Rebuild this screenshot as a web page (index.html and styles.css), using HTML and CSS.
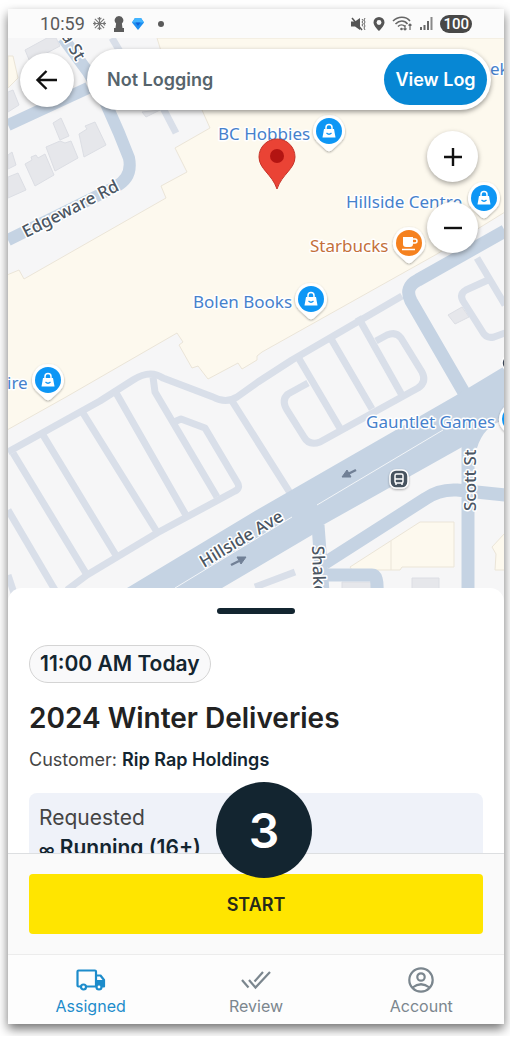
FILE: index.html
```html
<!DOCTYPE html>
<html lang="en">
<head>
<meta charset="utf-8">
<meta name="viewport" content="width=device-width, initial-scale=1">
<title>2024 Winter Deliveries</title>
<link rel="stylesheet" href="styles.css">
</head>
<body>
<div class="stage">
<div class="phone">
  <header class="status">
    <div class="status-group">
      <span class="clock">10:59</span>
      <svg class="icon-snow" viewBox="0 0 14 14" aria-hidden="true"><g stroke="#777" stroke-width="1.2" fill="none"><path d="M7 0v14M0 7h14M2 2l10 10M12 2L2 12"/><path d="M5 1l2 2 2-2M5 13l2-2 2 2M1 5l2 2-2 2M13 5l-2 2 2 2"/></g></svg>
      <svg class="icon-pawn" viewBox="0 0 10 16" aria-hidden="true"><path d="M5 0a4.300 4.300 0 0 1 2.900 7.500L8.500 12H10v4H0v-4h1.500L2.100 7.500A4.300 4.300 0 0 1 5 0z" fill="#5c5c5c"/></svg>
      <svg class="icon-gem" viewBox="0 0 12 14" aria-hidden="true"><path d="M3 1h6l3 4.500L6 13 0 5.500z" fill="#1c8ef0"/><path d="M3 1h6l3 4.500H0z" fill="#42b4ff"/><path d="M3.500 5.500h5L6 9z" fill="#1262d8"/></svg>
      <span class="dot"></span>
    </div>
    <div class="status-group status-right">
      <svg class="icon-mute" viewBox="0 0 15 14" aria-hidden="true"><path d="M0 4.500h4L9 1v12L4 9.500H0z" fill="#555"/><path d="M1 1l10 12" stroke="#555" stroke-width="1.500"/><path d="M11 2l1 1.500-1 1.500 1 1.500-1 1.500 1 1.500M14 1l-1 2 1 2-1 2 1 2-1 2 1 2" stroke="#666" fill="none"/></svg>
      <svg class="icon-place" viewBox="0 0 12 14" aria-hidden="true"><path d="M6 0a5.500 5.500 0 0 1 5.500 5.500C11.500 9 6 14 6 14S.5 9 .5 5.500A5.500 5.500 0 0 1 6 0z" fill="#555"/><circle cx="6" cy="5.500" r="2.400" fill="#fafafa"/></svg>
      <svg class="icon-wifi" viewBox="0 0 21 15" aria-hidden="true"><g fill="none" stroke="#666" stroke-width="1.600"><path d="M1 5c5-5 13-5 17 0M3.500 8c4-4 9-4 12 0M6 10.500c2-2 5-2 7 0"/><path d="M13 9v5M11.500 12.500L13 14l1.500-1.500M18 14V8M16.500 9.500L18 8l1.500 1.500" stroke-width="1.200"/></g><circle cx="9.500" cy="13" r="1.300" fill="#666"/></svg>
      <svg class="icon-signal" viewBox="0 0 13 13" aria-hidden="true"><path d="M0 10h2v3H0zM3.500 8h2v5h-2zM7 4h2v9H7z" fill="#666"/><path d="M10.500 0h2v13h-2z" fill="#888"/></svg>
      <span class="battery">100</span>
    </div>
  </header>

  <main class="map">
    <svg class="map-art" viewBox="8 38 496 562" preserveAspectRatio="xMidYMin slice" role="img" aria-label="Map around Hillside Avenue">
      <defs>
        <filter id="soft" x="-30%" y="-30%" width="160%" height="170%"><feDropShadow dx="0" dy="1" stdDeviation="1" flood-opacity=".35"/></filter>
        <g id="pin"><path d="M0-16A16 16 0 0 1 12 10.500L3 19Q0 21.500-3 19L-12 10.500A16 16 0 0 1 0-16z" fill="#fff" filter="url(#soft)"/></g>
        <g id="shop"><use href="#pin"/><circle r="13" fill="#0d96f5"/><path d="M-5-2H5L6.500 6.500h-13z" fill="#fff"/><path d="M-3-1v-2.500a3 3 0 0 1 6 0V-1" fill="none" stroke="#fff" stroke-width="1.500"/><path d="M-2.500 2Q0 4.500 2.500 2" fill="none" stroke="#0d96f5" stroke-width="1.200"/></g>
      </defs>
      <rect x="8" y="38" width="496" height="562" fill="#f6f6f7"/>
      <g class="blocks">
        <path d="M25 50L47 38H56L60 46 30 62zM8 92l5-2 6 15-11 7zM53 123l8-5 8 18-9 4zM79 134l8-5-2-3 10-4 11 23-22 12zM46 147l14-6 5 2 6-2 7 17-23 13zM25 164l7-4-1-3 5-2 2 3 7-4 9 21-19 11zM8 177l10-4 8 17-18 8zM8 155l4-3 4 13-8 4zM142 112l18-2-14 7zM448 315l14-8 7 10-14 7zM412 578h27v12h-27zM342 582h29v10h-29z"/>
      </g>
      <g class="land">
        <path d="M8 56h5l5 22-10 10z"/>
        <path d="M157 38l8 26 37 46 8 18-35 20 12 24-26 14 5 12L24 279l-5-9-12 5v155l59-33 111-64 6 9-4 3 13 23 6-2 10 13 30-16 4 6 15-9v-4l5-4 175-98 68-42V38z"/>
        <path d="M350 567l42-27 28-18h34v45h-52l-2 3h-48zM391 541v29M505 533l-13 14 4 7-1 16h10z"/>
      </g>
      <g class="lanes">
        <path d="M112 38l13 22 38 48 13 25"/>
        <path d="M8 452L100 401 133 380Q150 369 163 378L213 397Q226 404 237 397L258 382 292 360 402 296"/>
        <path d="M13 453L87 575M43 435l74 122M83 413l74 119M115 391l72 126M153 377l2 15 62 105M8 510l47 80M8 575l6 18"/>
        <path d="M67 590L87 575 157 533 235 491Q241 488 237 482L205 428 181 419 174 422M232 401l60 95"/>
        <path d="M308 383L288 394Q281 400 287 410L304 437Q309 446 320 442L418 388Q427 382 422 372L401 338Q396 331 387 335L376 341M298 357l43 73M330 337l42 72M358 317l45 80"/>
        <path d="M477 258l28 47M488 280l-22 10Q459 294 463 301L482 331Q486 339 494 337L505 333M255 587l40-15"/>
      </g>
      <g class="roads">
        <path d="M63 38L88 72 104 99 119 133 129 158Q133 178 115 187L8 240M8 125L88 88"/>
        <path class="wide" d="M505 231L418 280Q404 287 411 301L466 396"/>
        <path class="wide" d="M468 430V592M318 525l5 67M325 563L425 499Q439 489 457 490L505 495M327 575h45q6 0 5 17"/>
        <path class="fill" d="M127 588L255 511 455 396 505 366V420Q484 425 477 448L464 446 323 525 312 535 222 588z"/>
      </g>
      <path d="M443 430L317 505M292 517L175 588" fill="none" stroke="#f2f5f8" stroke-width="1"/>
      <g fill="#718096" stroke="#718096" stroke-width="2.500"><path d="M356 470l-8 4"/><path d="M342 477l5-7 4 7z" stroke-width="1"/><path d="M231 565l8-4"/><path d="M246 557l-9 0 4 7z" stroke-width="1"/></g>
      <g class="street">
        <text transform="translate(26 238) rotate(-27)">Edgeware Rd</text>
        <text transform="translate(204 568) rotate(-31)">Hillside Ave</text>
        <text transform="translate(476 511) rotate(-90)">Scott St</text>
        <text transform="translate(312 546) rotate(88)">Shake</text>
        <text transform="translate(61 36) rotate(60)">a St</text>
      </g>
      <g class="place">
        <text x="218" y="140">BC Hobbies</text>
        <text x="346" y="208">Hillside Centre</text>
        <text x="193" y="308">Bolen Books</text>
        <text x="7" y="389">ire</text>
        <text x="366" y="428">Gauntlet Games</text>
        <text x="490" y="75">ek</text>
        <text class="cafe" x="310" y="252">Starbucks</text>
      </g>
      <use href="#shop" x="329" y="131"/>
      <use href="#shop" x="484" y="198"/>
      <use href="#shop" x="311" y="299"/>
      <use href="#shop" x="48" y="380"/>
      <use href="#shop" x="515" y="419"/>
      <g transform="translate(409 243)"><use href="#pin"/><circle r="13" fill="#f5811f"/><path d="M-6-6H4V1Q4 4 1 4H-3Q-6 4-6 1z" fill="#fff"/><path d="M4-4h2q2 0 2 2t-2 2H4M-7 6.500H6" fill="none" stroke="#fff" stroke-width="1.500"/></g>
      <circle cx="510" cy="363" r="8" fill="#3c4656" stroke="#fff" stroke-width="1.500"/>
      <g transform="translate(399 479)"><rect x="-9" y="-9" width="18" height="18" rx="6" fill="#46525f" stroke="#fff" stroke-width="1.500" filter="url(#soft)"/><rect x="-4" y="-5" width="8" height="9" rx="1.500" fill="none" stroke="#fff" stroke-width="1.500"/><path d="M-4 0H4M-3 4v2M3 4v2" stroke="#fff" stroke-width="1.500"/></g>
      <path d="M277 139a18 18 0 0 1 18 18c0 12-13 17-18 32-5-15-18-20-18-32a18 18 0 0 1 18-18z" fill="#ea4335" stroke="#c5352a" stroke-width="1"/>
      <circle cx="277" cy="156" r="7" fill="#b31412"/>
    </svg>

    <div class="topbar">
      <button class="round back" aria-label="Back"><svg viewBox="0 0 24 24"><path d="M22 12H3M11.500 3L2.500 12l9 9"/></svg></button>
      <div class="logbar">
        <span class="logstate">Not Logging</span>
        <button class="viewlog">View Log</button>
      </div>
    </div>
    <div class="zoom">
      <button class="round" aria-label="Zoom in"><svg viewBox="0 0 24 24"><path d="M12 3v18M3 12h18"/></svg></button>
      <button class="round" aria-label="Zoom out"><svg viewBox="0 0 24 24"><path d="M3 12h18"/></svg></button>
    </div>
  </main>

  <section class="sheet">
    <div class="handle"></div>
    <span class="time">11:00 AM Today</span>
    <h1>2024 Winter Deliveries</h1>
    <p class="customer">Customer: <b>Rip Rap Holdings</b></p>
    <div class="card">
      <p>Requested</p>
      <p><b><span class="infinity">∞</span> Running (16+)</b></p>
    </div>
  </section>

  <div class="action"><button class="start">START</button></div>

  <nav class="tabs">
    <a class="tab active" href="#assigned">
      <svg viewBox="0 0 30 26" aria-hidden="true"><path d="M20 19.500H2.500Q1.500 19.500 1.500 18.500V4.500Q1.500 3.500 2.500 3.500H19Q20 3.500 20 4.500zM20 8.500h4.500L28 13v6.500h-8" fill="none" stroke="currentColor" stroke-width="2.200" stroke-linejoin="round"/><path d="M20 13h8v6h-8z" fill="currentColor"/><circle cx="7.500" cy="20" r="2.500" fill="#fff" stroke="currentColor" stroke-width="2.200"/><circle cx="23" cy="20" r="2.500" fill="#fff" stroke="currentColor" stroke-width="2.200"/></svg>
      <span>Assigned</span></a>
    <a class="tab" href="#review">
      <svg viewBox="0 0 30 26" aria-hidden="true"><path d="M1 13l6.500 7.500M8 13l6.500 7.500L29 5M13.500 14.500L22 5" fill="none" stroke="currentColor" stroke-width="2.200"/></svg>
      <span>Review</span></a>
    <a class="tab" href="#account">
      <svg viewBox="0 0 30 26" aria-hidden="true"><g fill="none" stroke="currentColor" stroke-width="2.200"><circle cx="15" cy="13" r="11.700"/><circle cx="15" cy="10" r="3.700"/><path d="M6.500 20.500Q15 14 23.500 20.500"/></g></svg>
      <span>Account</span></a>
  </nav>

  <div class="step">3</div>
</div>
</div>
</body>
</html>
```
FILE: styles.css
```css
* { box-sizing: border-box; }
body { margin: 0; background: #fff; color: #132530; font-family: Inter, Roboto, sans-serif; }
button { border: 0; padding: 0; font: inherit; color: inherit; cursor: pointer; }
h1, p { margin: 0; }

.stage { height: calc(100vh - 9px); padding: 9px 6px 12px 8px; overflow: hidden; }
.phone { position: relative; display: flex; flex-direction: column; height: 100%; background: #fff; box-shadow: 0 5px 10px rgba(0, 0, 0, .55); }

.status { flex: none; display: flex; justify-content: space-between; align-items: center; height: 29px; padding: 0 32px; background: #fbfbfb; color: #5a5a5a; font-family: Roboto, sans-serif; }
.status-group { display: flex; align-items: center; gap: 8px; }
.status svg { display: block; flex: none; }
.clock { font-size: 18px; }
.icon-snow { width: 13px; height: 13px; }
.icon-pawn { width: 10px; height: 16px; }
.icon-gem { width: 12px; height: 14px; }
.dot { width: 6px; height: 6px; margin-left: 6px; border-radius: 50%; background: #5a5a5a; }
.icon-mute { width: 15px; height: 14px; }
.icon-place { width: 12px; height: 14px; }
.icon-wifi { width: 21px; height: 15px; }
.status-right { gap: 7px; }
.icon-signal { width: 13px; height: 13px; }
.battery { padding: 0 3px; border-radius: 9px; background: #484848; color: #fff; font-size: 15px; font-weight: 500; line-height: 18px; }

.map { position: relative; flex: none; aspect-ratio: 496 / 562; overflow: hidden; }
.map-art { display: block; width: 100%; height: 100%; }
.blocks { fill: #e6e7eb; stroke: #dcdee4; }
.land { fill: #fdf9ee; stroke: #ebe5d8; }
.lanes { fill: none; stroke: #d9dfe9; stroke-width: 7; stroke-linejoin: round; }
.roads { fill: none; stroke: #c5d3e3; stroke-width: 12; stroke-linejoin: round; }
.roads .wide { stroke-width: 13; }
.roads .fill { fill: #c5d3e3; stroke: none; }
.map-art text { font-family: "Noto Sans", sans-serif; font-size: 17px; paint-order: stroke; stroke: #fff; stroke-width: 3px; stroke-linejoin: round; }
.street { fill: #4b5663; font-weight: 500; }
.place { fill: #4681cc; }
.place .cafe { fill: #c4703a; }

.topbar { position: absolute; top: 11px; left: 12px; right: 13px; display: flex; align-items: center; gap: 13px; }
.round { display: grid; place-items: center; width: 51px; height: 51px; border-radius: 50%; background: #fff; box-shadow: 0 2px 5px rgba(0, 0, 0, .35); }
.round svg { width: 24px; height: 24px; fill: none; stroke: #111; stroke-width: 2.4; }
.back { flex: none; width: 54px; height: 54px; }
.logbar { flex: 1; display: flex; align-items: center; justify-content: space-between; height: 61px; padding: 0 4px 0 20px; border-radius: 31px; background: #fff; box-shadow: 0 2px 5px rgba(0, 0, 0, .4); }
.logstate { color: #56646c; font-size: 18px; font-weight: 600; }
.viewlog { width: 103px; height: 51px; border-radius: 26px; background: #0787d4; color: #fff; font-size: 18px; font-weight: 600; }
.zoom { position: absolute; top: 93px; right: 26px; display: grid; gap: 20px; }

.sheet { position: relative; flex: 1; min-height: 0; margin-top: -12px; padding: 20px 21px 0; overflow: hidden; border-radius: 14px 14px 0 0; background: #fff; }
.handle { width: 78px; height: 6px; margin: 0 auto 31px; border-radius: 3px; background: #132530; }
.time { display: block; width: fit-content; padding: 0 10px; border: 1px solid #d4d4d4; border-radius: 19px; background: #f9f9fa; font-size: 21px; font-weight: 600; line-height: 36px; }
h1 { margin-top: 19px; color: #222; font-size: 28px; font-weight: 600; line-height: 32px; }
.customer { margin-top: 14px; color: #444; font-size: 18px; line-height: 24px; }
.customer b, .card b { color: #132530; font-weight: 600; }
.card { margin-top: 21px; padding: 10px; border-radius: 8px; background: #eff2f9; color: #444; font-size: 21px; line-height: 30px; }
.infinity { font-size: 16px; }

.action { flex: none; position: relative; padding: 20px 21px; border-top: 1px solid #dddfe1; background: #fafafa; }
.start { display: block; width: 100%; height: 60px; border-radius: 4px; background: #ffe500; color: #26291a; font-size: 18px; font-weight: 600; }
.tabs { flex: none; display: grid; grid-template-columns: repeat(3, 1fr); height: 70px; padding-top: 12px; border-top: 1px solid #ececec; background: #fdfdfd; }
.tab { display: flex; flex-direction: column; align-items: center; gap: 3px; color: #7b868e; font-size: 16px; line-height: 20px; text-decoration: none; }
.tab svg { display: block; width: 30px; height: 26px; }
.active { color: #1d8ccb; }
.step { position: absolute; bottom: 146px; left: calc(50% - 40px); display: grid; place-items: center; width: 96px; height: 96px; border-radius: 50%; background: #132530; color: #fff; font-size: 48px; font-weight: 600; }
```
